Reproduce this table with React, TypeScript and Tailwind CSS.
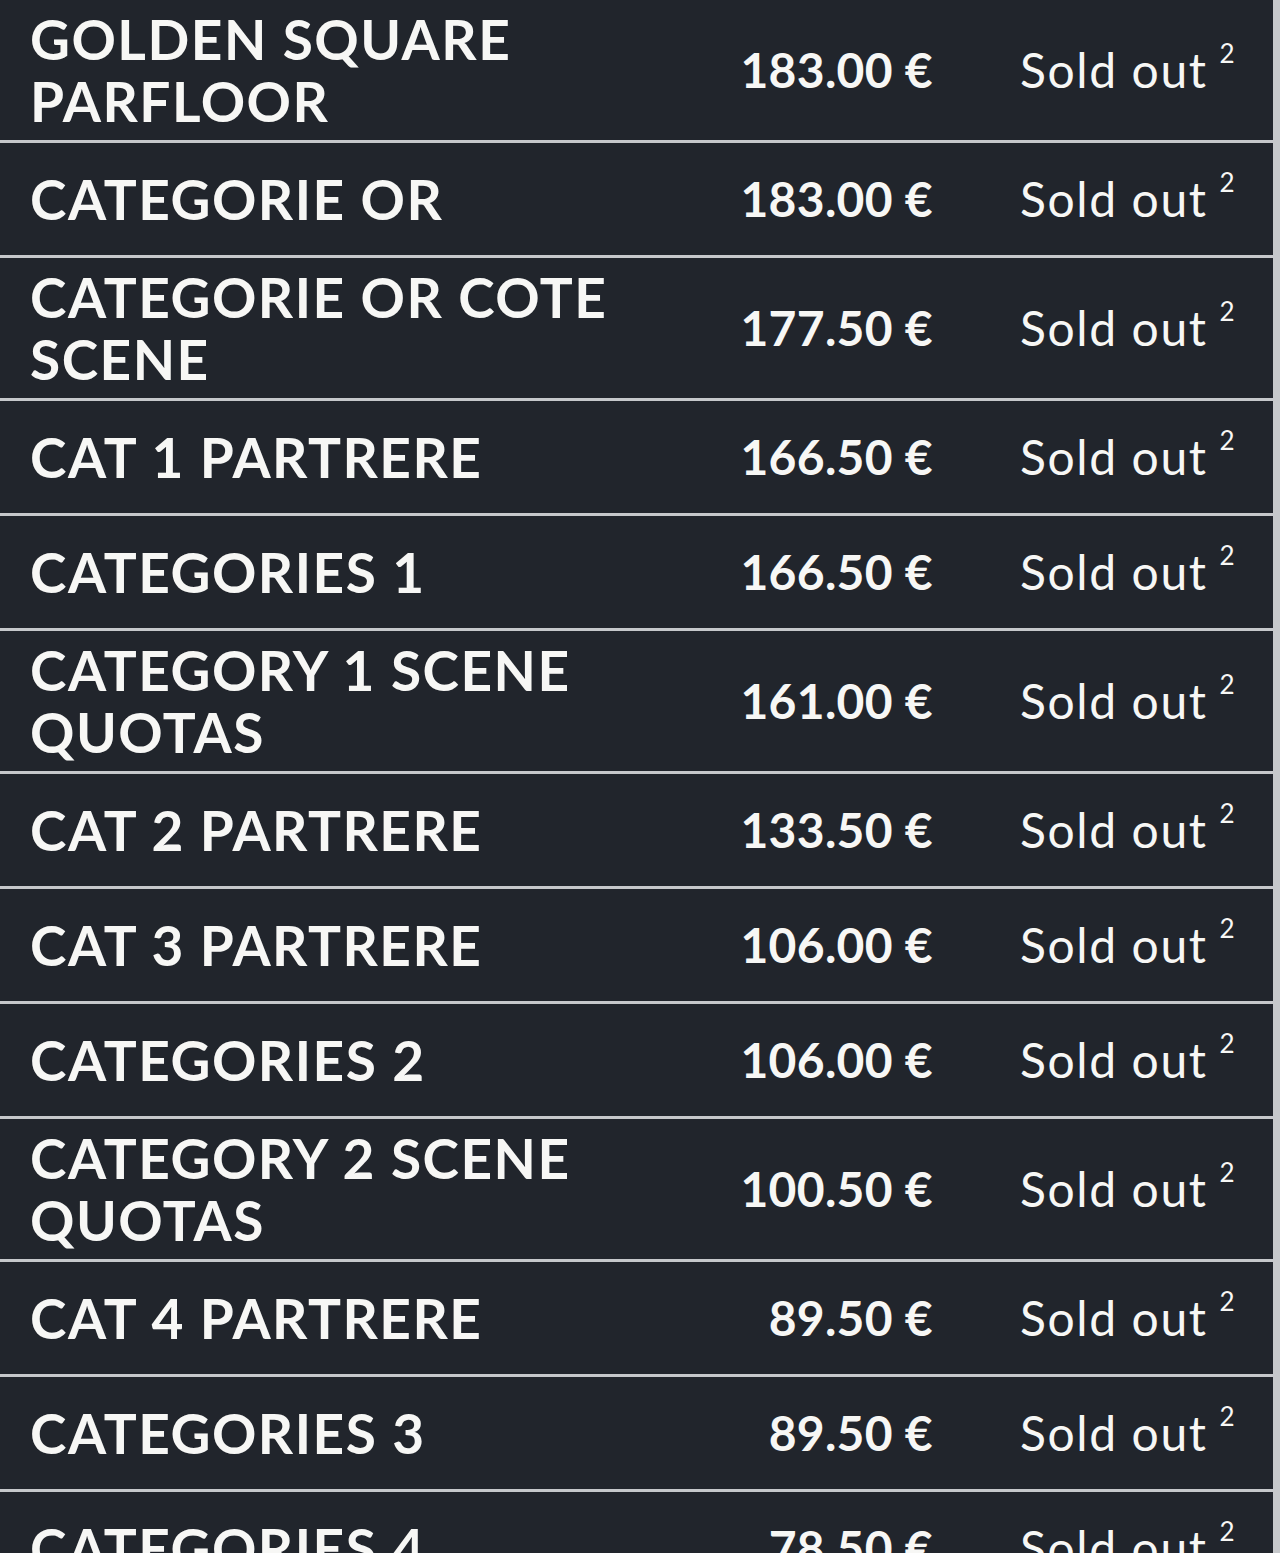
const rows = [
  { name: "GOLDEN SQUARE PARFLOOR", price: "183.00 €" },
  { name: "CATEGORIE OR", price: "183.00 €" },
  { name: "CATEGORIE OR COTE SCENE", price: "177.50 €" },
  { name: "CAT 1 PARTRERE", price: "166.50 €" },
  { name: "CATEGORIES 1", price: "166.50 €" },
  { name: "CATEGORY 1 SCENE QUOTAS", price: "161.00 €" },
  { name: "CAT 2 PARTRERE", price: "133.50 €" },
  { name: "CAT 3 PARTRERE", price: "106.00 €" },
  { name: "CATEGORIES 2", price: "106.00 €" },
  { name: "CATEGORY 2 SCENE QUOTAS", price: "100.50 €" },
  { name: "CAT 4 PARTRERE", price: "89.50 €" },
  { name: "CATEGORIES 3", price: "89.50 €" },
  { name: "CATEGORIES 4", price: "78.50 €" },
  { name: "CATEGORIES 5", price: "67.50 €" },
];

export default function App() {
  return (
    <div
      className="h-[1553px] overflow-hidden bg-[#c6c8cb] text-[#f7f7f5]"
      style={{ fontFamily: "Lato, 'Noto Sans', sans-serif" }}
    >
      <div className="flex w-[1273px] flex-col gap-[3px]">
        {rows.map((row) => (
          <div
            key={row.name}
            className="flex min-h-[112px] items-center bg-[#21252c] py-2 pl-[30px]"
          >
            <div className="w-[640px] text-[55px] font-bold leading-[62px] tracking-[1.5px]">
              {row.name}
            </div>
            <div className="flex-1 text-right text-[48px] font-bold tracking-[0.3px]">
              {row.price}
            </div>
            <div className="w-[340px] whitespace-nowrap pl-[87px] text-[48px] tracking-[1.6px]">
              Sold out
              <span className="relative -top-[25px] ml-[12px] text-[26px] tracking-normal">2</span>
            </div>
          </div>
        ))}
      </div>
    </div>
  );
}
